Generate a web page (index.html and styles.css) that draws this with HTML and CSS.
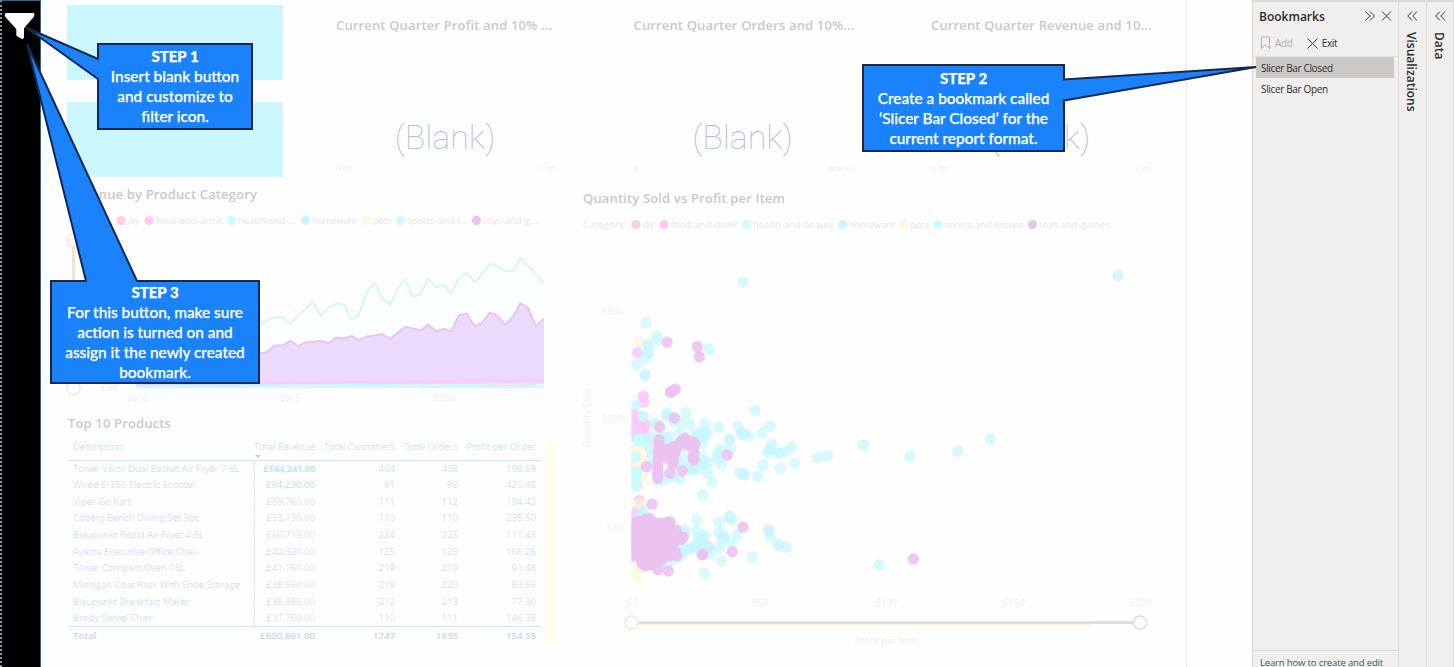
FILE: index.html
```html
<!DOCTYPE html>
<html lang="en">
<head>
<meta charset="utf-8">
<title>Sales report</title>
<link rel="stylesheet" href="styles.css">
</head>
<body>
<div class="app">
  <aside class="rail">
    <svg class="funnel" width="32" height="28" viewBox="4 12 32 28"><path d="M5.500 13H34Q35 15 33.800 16.800L24 28.300V37.500Q23.500 39.300 21.500 38.800L17.500 36.600Q16.300 36 16.300 34.800V29L5.400 17Q4.200 15 5.500 13Z"/></svg>
  </aside>

  <main class="report">
    <section class="top">
      <div class="tiles"><div class="tile"></div><div class="tile"></div></div>
      <article class="gauge"><h2>Current Quarter Profit and 10% ...</h2><div class="value">(Blank)</div><div class="range"><span>0.00</span><span>1.00</span></div></article>
      <article class="gauge"><h2>Current Quarter Orders and 10%...</h2><div class="value">(Blank)</div><div class="range"><span>0</span><span>(Blank)</span></div></article>
      <article class="gauge"><h2>Current Quarter Revenue and 10...</h2><div class="value">(Blank)</div><div class="range"><span>0.00</span><span>1.00</span></div></article>
    </section>

    <section class="bottom">
      <div class="left">
        <h2>Revenue by Product Category</h2>
        <svg class="area" width="500" height="202" viewBox="60 207 500 202">
          <g class="key">
            <circle cx="121" cy="220.500" r="4.500" fill="#ffd0d9"/><text x="127.500" y="224" textLength="12">diy</text>
            <circle cx="149" cy="220.500" r="4.500" fill="#fcc9f8"/><text x="155.500" y="224" textLength="67">food-and-drink</text>
            <circle cx="231.500" cy="220.500" r="4.500" fill="#ccfdfd"/><text x="238" y="224" textLength="57">health-and-...</text>
            <circle cx="305.500" cy="220.500" r="4.500" fill="#c8f5fe"/><text x="312" y="224" textLength="45">homeware</text>
            <circle cx="366.500" cy="220.500" r="4.500" fill="#fff7df"/><text x="373" y="224" textLength="18">pets</text>
            <circle cx="400.500" cy="220.500" r="4.500" fill="#c8fcfe"/><text x="407" y="224" textLength="60">sports-and-l...</text>
            <circle cx="476.500" cy="220.500" r="4.500" fill="#ebc1f0"/><text x="483" y="224" textLength="55">toys-and-g...</text>
          </g>
          <path class="track" d="M73.500 246V382"/>
          <circle class="knob" cx="73.500" cy="240" r="6.500"/><circle class="knob" cx="73.500" cy="388.500" r="6.500"/>
          <g id="area"></g>
          <g class="axis">
            <text x="101" y="391" textLength="17">£0K</text>
            <text x="127" y="401" textLength="21">2010</text>
            <text x="280" y="401" textLength="21">2015</text>
            <text x="434" y="401" textLength="21">2020</text>
          </g>
        </svg>
        <h2>Top 10 Products</h2>
        <div class="table-wrap">
          <table>
            <colgroup><col class="c1"><col class="c2"><col class="c3"><col class="c4"><col class="c5"></colgroup>
            <thead><tr><th>Description</th><th class="sorted">Total Revenue</th><th>Total Customers</th><th>Total Orders</th><th>Profit per Order</th></tr></thead>
            <tbody>
              <tr><td>Tower Vortx Dual Basket Air Fryer 7.6L</td><td class="hot">£164,241.00</td><td>404</td><td>408</td><td>196.69</td></tr>
              <tr><td>Wired E-350 Electric Scooter</td><td class="warm">£94,230.00</td><td>91</td><td>92</td><td>420.45</td></tr>
              <tr><td>Viper Go Kart</td><td>£59,760.00</td><td>111</td><td>112</td><td>194.42</td></tr>
              <tr><td>Coberg Bench Dining Set 3pc</td><td>£53,130.00</td><td>110</td><td>110</td><td>235.50</td></tr>
              <tr><td>Blaupunkt Rapid Air Fryer 4.5L</td><td>£50,715.00</td><td>224</td><td>225</td><td>111.43</td></tr>
              <tr><td>Avesta Executive Office Chair</td><td>£42,320.00</td><td>125</td><td>125</td><td>166.26</td></tr>
              <tr><td>Tower Compact Oven 15L</td><td>£41,760.00</td><td>219</td><td>219</td><td>91.48</td></tr>
              <tr><td>Michigan Coat Rack With Shoe Storage</td><td>£38,560.00</td><td>219</td><td>220</td><td>83.56</td></tr>
              <tr><td>Blaupunkt Breakfast Maker</td><td>£38,385.00</td><td>212</td><td>213</td><td>77.30</td></tr>
              <tr><td>Brody Swivel Chair</td><td>£37,760.00</td><td>110</td><td>111</td><td>146.35</td></tr>
            </tbody>
            <tfoot><tr><td>Total</td><td>£620,861.00</td><td>1747</td><td>1835</td><td>154.55</td></tr></tfoot>
          </table>
          <div class="scroll"></div>
        </div>
      </div>

      <div class="right">
        <h2>Quantity Sold vs Profit per Item</h2>
        <svg class="scatter" width="590" height="455" viewBox="580 212 590 455">
          <defs><clipPath id="plot"><rect x="631.500" y="240" width="520" height="350"/></clipPath></defs>
          <g class="key">
            <text x="583" y="228" textLength="41">Category</text>
            <circle cx="636" cy="224.500" r="4.500" fill="#ffd0d9"/><text x="642.500" y="228" textLength="12">diy</text>
            <circle cx="664" cy="224.500" r="4.500" fill="#fcc9f8"/><text x="670.500" y="228" textLength="67">food-and-drink</text>
            <circle cx="746.500" cy="224.500" r="4.500" fill="#ccfdfd"/><text x="753" y="228" textLength="81">health-and-beauty</text>
            <circle cx="842.500" cy="224.500" r="4.500" fill="#c8f5fe"/><text x="849" y="228" textLength="46">homeware</text>
            <circle cx="904" cy="224.500" r="4.500" fill="#fff7df"/><text x="910" y="228" textLength="19">pets</text>
            <circle cx="938" cy="224.500" r="4.500" fill="#c8fcfe"/><text x="944.500" y="228" textLength="79">sports-and-leisure</text>
            <circle cx="1032.500" cy="224.500" r="4.500" fill="#ebc1f0"/><text x="1039" y="228" textLength="71">toys-and-games</text>
          </g>
          <g id="dots" clip-path="url(#plot)"></g>
          <g class="axis">
            <text x="602" y="313.500" textLength="21">1500</text>
            <text x="602" y="422" textLength="21">1000</text>
            <text x="607" y="530.500" textLength="16">500</text>
            <text x="627" y="605.500" textLength="11">£0</text>
            <text x="752" y="605.500" textLength="16">£50</text>
            <text x="876" y="605.500" textLength="21">£100</text>
            <text x="1003" y="605.500" textLength="22">£150</text>
            <text x="1130" y="605.500" textLength="22">£200</text>
            <text x="855" y="644" textLength="63">Profit per Item</text>
            <text transform="translate(590 447) rotate(-90)" textLength="58">Quantity Sold</text>
          </g>
          <path d="M638 622.500H1134" stroke="#dedddd" stroke-width="3"/>
          <path d="M638 621.300H1092M638 624.300H1092" stroke="#fbf0d8"/>
          <path d="M638 622.800H1092" stroke="#e0dbd8" stroke-width="2"/>
          <circle class="knob" cx="631.500" cy="622.500" r="6.500"/><circle class="knob grey" cx="1140" cy="622.500" r="6.500"/>
        </svg>
      </div>
    </section>
    <div class="edge"></div>
  </main>

  <aside class="bookmarks">
    <header><h1>Bookmarks</h1>
      <svg width="28" height="12" viewBox="0 0 28 12"><path d="M1.500 1.500 6 6 1.500 10.500M6 1.500 10.500 6 6 10.500M18 1.500 27 10.500M27 1.500 18 10.500"/></svg>
    </header>
    <div class="tools">
      <svg width="11" height="14" viewBox="0 0 11 14" class="muted"><path d="M6.500 10 5 9 1.500 12.500V1H9.500V8M9.500 9V13M7.500 11H11"/></svg><span class="muted">Add</span>
      <svg class="exit" width="11" height="11" viewBox="0 0 11 11"><path d="M.5 .5 10.500 10.500M10.500 .5 .5 10.500"/></svg><span>Exit</span>
    </div>
    <ul><li class="selected">Slicer Bar Closed</li><li>Slicer Bar Open</li></ul>
    <footer><a>Learn how to create and edit</a></footer>
  </aside>
  <aside class="folded">
    <svg width="11" height="12" viewBox="0 0 11 12"><path d="M5 1.500 .8 6 5 10.500M10 1.500 5.800 6 10 10.500"/></svg><span class="vis">Visualizations</span>
  </aside>
  <aside class="folded last">
    <svg width="11" height="12" viewBox="0 0 11 12"><path d="M5 1.500 .8 6 5 10.500M10 1.500 5.800 6 10 10.500"/></svg><span>Data</span>
  </aside>

  <svg class="shapes" width="1454" height="667" viewBox="0 0 1454 667">
    <path d="M98 44H252V129H98V79L26 27.500 98 59Z"/>
    <path d="M863 65H1064V79.500L1256 67 1064 100.500V151H863Z"/>
    <path d="M51 281H86L27 44 137 281H259V383H51Z"/>
  </svg>
  <div class="note one"><b>STEP 1</b><br>Insert blank button<br>and customize to<br>filter icon.</div>
  <div class="note two"><b>STEP 2</b><br>Create a bookmark called<br>‘Slicer Bar Closed’ for the<br>current report format.</div>
  <div class="note three"><b>STEP 3</b><br>For this button, make sure<br>action is turned on and<br>assign it the newly created<br>bookmark.</div>
</div>
<script src="charts.js"></script>
</body>
</html>
```
FILE: styles.css
```css
* { box-sizing: border-box; }
body { margin: 0; font-family: "Open Sans", "Noto Sans", sans-serif; background: #fff; overflow: hidden; }
h1, h2, ul { margin: 0; padding: 0; }
.app { position: relative; display: flex; width: 1454px; height: 667px; }

.rail { width: 41px; background: #000; border-top: 1px solid #27689c; border-right: 1px solid #27689c; padding: 11px 0 0 2px; border-left: 2px dotted #8497a3; }
.funnel { display: block; fill: #fff; }

.report { position: relative; width: 1211px; background: #fefefe; }
.report h2 { font-size: 13px; font-weight: 600; color: #c9c9c9; white-space: nowrap; line-height: 18px; letter-spacing: .15px; }
.top { display: flex; height: 183px; padding: 5px 0 0 26px; }
.tiles { display: flex; flex-direction: column; gap: 22px; width: 269px; }
.tile { width: 216px; height: 75px; background: #ccf7fe; }
.gauge { width: 297.5px; padding-top: 11px; }
.value { width: 218px; margin-top: 82px; text-align: center; font: 100 34px/42px Roboto, sans-serif; color: #a9bdd9; letter-spacing: 0; }
.range { display: flex; justify-content: space-between; width: 219px; margin-top: 4px; font-size: 8px; line-height: 12px; color: #f0eaf3; }

.bottom { display: flex; }
.left { width: 514px; padding-left: 19px; }
.left h2 { margin-left: 8px; padding-top: 2px; height: 24px; }
.left .area + h2 { padding-top: 5px; height: 27px; }
.right { padding: 6px 0 0 25px; }
.right h2 { margin-left: 3px; height: 23px; }
.area, .scatter { display: block; }
svg text { font-family: "Open Sans", "Noto Sans", sans-serif; font-size: 9.5px; }
.key text { fill: #e9e3ea; }
.axis text { fill: #eeebf0; font-size: 9px; }
.knob { fill: #fff; stroke: #f4e7d6; stroke-width: 1.5; }
.knob.grey { stroke: #dedede; }
.track { stroke: #efe0da; stroke-width: 3; }

.table-wrap { display: flex; padding: 2px 0 0 8px; }
table { table-layout: fixed; border-collapse: collapse; width: 473px; font-size: 9.7px; line-height: 12px; color: #bfd4eb; font-weight: 300; }
.c1 { width: 186px; } .c2 { width: 67px; } .c3 { width: 80px; } .c4 { width: 63px; } .c5 { width: 77px; }
th, td { padding: 0; text-align: right; white-space: nowrap; font-weight: inherit; }
td:first-child, th:first-child { text-align: left; padding-left: 5px; }
td:nth-child(2), th:nth-child(2) { padding-right: 6px; }
td:nth-child(3), th:nth-child(3) { padding-right: 6px; }
td:nth-child(4), th:nth-child(4) { padding-right: 6px; }
td:last-child, th:last-child { padding-right: 5px; }
th { height: 22px; vertical-align: top; padding-top: 3px; border-bottom: 1px solid #cfe3fb; }
.sorted { position: relative; }
.sorted::after { content: ""; position: absolute; left: 1px; bottom: 2px; border: 3px solid transparent; border-top-color: #bdcfe3; border-bottom: 0; }
tbody td { height: 16.7px; }
tbody td:nth-child(2) { border-left: 1px dashed #c3ecfb; }
tbody td.hot { color: #b0e4f6; font-weight: 600; letter-spacing: -.3px; }
tbody td.warm { color: #bbdff3; font-weight: 400; }
tfoot td { height: 18px; border-top: 1px solid #cfe9fb; font-weight: 600; color: #c8d8ea; }
.scroll { width: 6px; height: 201px; margin: 3px 0 0 7px; background: #fffde2; }
.edge { position: absolute; left: 1145px; top: 0; height: 667px; border-left: 1px dotted #dcdcdc; }

.bookmarks { display: flex; flex-direction: column; width: 146px; background: #f0efee; border: solid #dcdad9; border-width: 2px 0 0 1px; color: #2c2b2a; }
.bookmarks svg, .folded svg { fill: none; stroke: #3b3a39; stroke-width: 1; }
.bookmarks header { display: flex; justify-content: space-between; align-items: center; height: 28px; padding: 0 6px 0 6px; }
h1 { font-size: 12px; font-weight: 600; }
.tools { display: flex; align-items: center; height: 26px; padding-left: 7px; font-size: 10px; }
.tools span { margin-left: 4px; letter-spacing: -.3px; }
.tools .exit { margin-left: 14px; }
.bookmarks .tools .muted { color: #b3b1af; stroke: #a9b5ae; }
.bookmarks ul { list-style: none; border-top: 1px solid #e1dfdd; padding: 0 4px 0 3px; flex: 1; font-size: 10px; letter-spacing: -.35px; line-height: 22px; }
.bookmarks li { padding-left: 5px; height: 21px; }
.selected { background: #cdc9c6; border-radius: 1px; }
.bookmarks footer { height: 17px; border-top: 1px solid #dcdad9; padding: 5px 0 0 7px; font-size: 9.5px; line-height: 14px; white-space: nowrap; overflow: hidden; letter-spacing: -.15px; }
footer a { color: #2f6159; text-decoration: underline; }
.folded { display: flex; flex-direction: column; align-items: center; width: 28px; padding-top: 8px; background: #f0efee; border: solid #dcdad9; border-width: 2px 0 0 1px; color: #2c2b2a; }
.folded.last { border-right-width: 1px; }
.folded span { writing-mode: vertical-rl; margin: 10px 3px 0 0; font-size: 12px; font-weight: 600; line-height: 16px; }

.shapes { position: absolute; left: 0; top: 0; fill: #1a82fa; stroke: #14284f; stroke-width: 2; }
.note { position: absolute; text-align: center; color: #fff; font: 500 15.4px/20px Lato, sans-serif; -webkit-text-stroke: .25px #fff; white-space: nowrap; }
.note b { font-weight: 900; font-size: 15px; }
.one { left: 98px; top: 46px; width: 154px; }
.two { left: 863px; top: 68px; width: 201px; }
.three { left: 51px; top: 282px; width: 208px; }
```
FILE: charts.js
```js
const NS = 'http://www.w3.org/2000/svg';
function add(parent, name, attrs) {
  const el = document.createElementNS(NS, name);
  for (const k in attrs) el.setAttribute(k, attrs[k]);
  parent.appendChild(el);
}

// Area chart: quarterly values as x,y pairs
const area = document.getElementById('area');
const sports = '136,346 160,340 190,334 220,330 245,327 260,324 267,320.500 274.700,317 282.700,317.500 290.300,323.700 298,316 305.700,309 313,301.700 320.700,316 328.300,307.700 336,303.700 344,304.300 351.700,320 359,314 367,290.700 374.700,283 382,298.300 390,305 397.300,289 405.300,280 413,297 420.700,293.700 428.300,278.700 436,287.300 443.700,284.700 451.300,293.700 459,277.700 466.700,272.700 474.700,281.700 482,274.300 489.700,264 497.300,265.700 505.300,271.300 513,271.300 520.300,258 528,265.300 536,274.300 544,283';
const toys = '136,366 180,361 220,357 245,355 260,353.500 267,352 274.700,345.500 282.700,345.300 290.300,340.700 298,345.700 305.700,342.300 313,342 320.700,340.700 328.300,343 336,337.700 344,338.300 351.700,336 359,340.300 367,336.300 374.700,335.300 382,334 390,338.700 405.300,326.700 413,328.500 420.700,330.300 428.300,324.700 436,331.300 443.700,328.700 451.300,331.300 459,315 466.700,313.700 474.700,326.300 482,322.700 489.700,312.700 497.300,315.700 505.300,324.300 513,316.700 520.300,303 528,307.700 536,326.300 544,318.300';
add(area, 'polygon', { points: sports + ' 544,387 136,387', fill: '#fbffff' });
add(area, 'polygon', { points: toys + ' 544,387 136,387', fill: '#ebdafc' });
add(area, 'polyline', { points: sports, fill: 'none', stroke: '#c8f7fe', 'stroke-width': 1.6 });
add(area, 'polyline', { points: toys, fill: 'none', stroke: '#ebc1f0', 'stroke-width': 1.8 });
add(area, 'polyline', { points: '136,384 280,383 340,382.500 400,382 460,381.500 495,380 510,381.500 530,379.500 544,381.500', fill: 'none', stroke: '#fcc9f8', 'stroke-width': 2 });
add(area, 'path', { d: 'M136 385.300 280 384.700 336 383.500 360 384.700 440 384 544 383.500V388H136Z', fill: '#c8fafe' });
add(area, 'path', { d: 'M290 386.300 338 386M395 386 408 384.800 420 386M425 386 435 384.800 445 386M475 386 488 384.300 544 385', fill: 'none', stroke: '#fbf3dc' });
add(area, 'path', { d: 'M487 385 515 385.300 535 384.300', fill: 'none', stroke: '#f6d5e2' });

// Scatter plot: points are in thirds of a pixel from (570, 300)
const dots = document.getElementById('dots');
function plot(list, fill, opacity) {
  const n = list.trim().split(/[\s,]+/).map(Number);
  for (let i = 0; i < n.length; i += 2)
    add(dots, 'circle', { cx: (570 + n[i] / 3).toFixed(1), cy: (300 + n[i + 1] / 3).toFixed(1), r: 5.7, fill, 'fill-opacity': opacity });
}
plot('203,158 220,289 221,307 190,342 205,352 194,370 212,368 230,376 193,389 215,390 237,388 190,408 225,410 208,602 192,642 188,497 200,555 415,740 208,620', '#fcc9f8', .9);
plot('207,127 252,393 245,430 230,445 225,460 200,475 220,485 205,500 193,520 216,532 200,440 195,455 190,490 208,611', '#fff3dc', .8);
plot('195,790 203,803 197,815 203,827 190,805 210,450 235,455', '#fff9de', .8);
plot('228,69 261,107 260,121 233,133 233,140 236,158 236,162 222,178 199,194 225,226 225,226 417,148 197,316 219,349 219,349 291,341 290,347 290,341 348,339 358,371 404,371 447,382 504,379 600,378 555,331 252,370 262,374 328,366 310,365 331,397 395,400 412,401 400,412 380,412 404,402 398,433 390,405 478,418 479,420 515,400 522,405 517,402 536,408 576,400 605,435 594,458 600,450 626,460 628,460 648,454 665,441 674,490 631,505 580,496 563,528 525,525 522,522 509,519 455,493 441,475 451,447 443,460 445,470 481,450 395,470 414,489 408,492 413,518 427,545 398,585 362,508 382,508 365,512 372,500 345,500 330,538 345,480 350,450 742,474 772,467 290,537 266,543 280,525 230,415 285,410 290,420 205,415 220,420 245,415 260,460 245,470 250,490 310,500 325,480 240,445 310,530 270,410 300,410 395,480 390,495 375,400', '#c6f6fe', .68);
plot('222,635 215,640 240,655 302,662 342,688 381,660 380,694 392,704 407,708 360,745 370,740 375,745 395,725 393,715 415,745 422,760 420,745 385,715 450,744 455,720 463,708 460,710 449,697 448,667 478,648 485,660 480,652 484,726 501,704 595,690 597,690 600,710 624,734 626,735 649,741 547,771 455,784 403,820 330,770 312,780 290,785 340,760 335,740 345,700 380,735 400,745 325,755 275,790 350,750', '#c6f6fe', .68);
plot('520,-54 1644,-73 880.500,435 1020,469.500 1164,453 1261.500,417 927,795', '#c6f6fe', .72);
plot('205,420 197,470 197,525 198,558 198,550 200,515 210,425', '#c8fdfe', .85);
plot('291,127 382,140 388,170 301,277 316,268 307,274 313,353 269,380 472,465 246,613 519,681 487,755 397,764 398,763 264,809 295,813 1030.500,777 229,500 337,512 300,520', '#ebc1f2', .88);
// Dense clusters of toys-and-games
plot('267,420 268,435 265,450 266,465 265,480 264,495 263,510 263,525 263,535 290,448 285,460 300,455 295,475 310,440 315,460 310,480 308,493 325,435 340,418 345,415 332,425 355,425 368,425 375,433 370,445 372,458 370,473 371,480 350,435 318,450', '#ebc1f0', .9);
let core = '';
for (let y = 670; y <= 770; y += 14)
  for (let x = 188; x <= 300; x += 14) core += `${x},${y} `;
plot(core + '225,657 240,657 205,665 295,665 318,690 325,710 340,712 335,718 315,725 315,755 320,767 310,760 215,790 225,798 240,795 260,785 275,778 255,670 235,790 302,690', '#ebc1f0', .9);
```
